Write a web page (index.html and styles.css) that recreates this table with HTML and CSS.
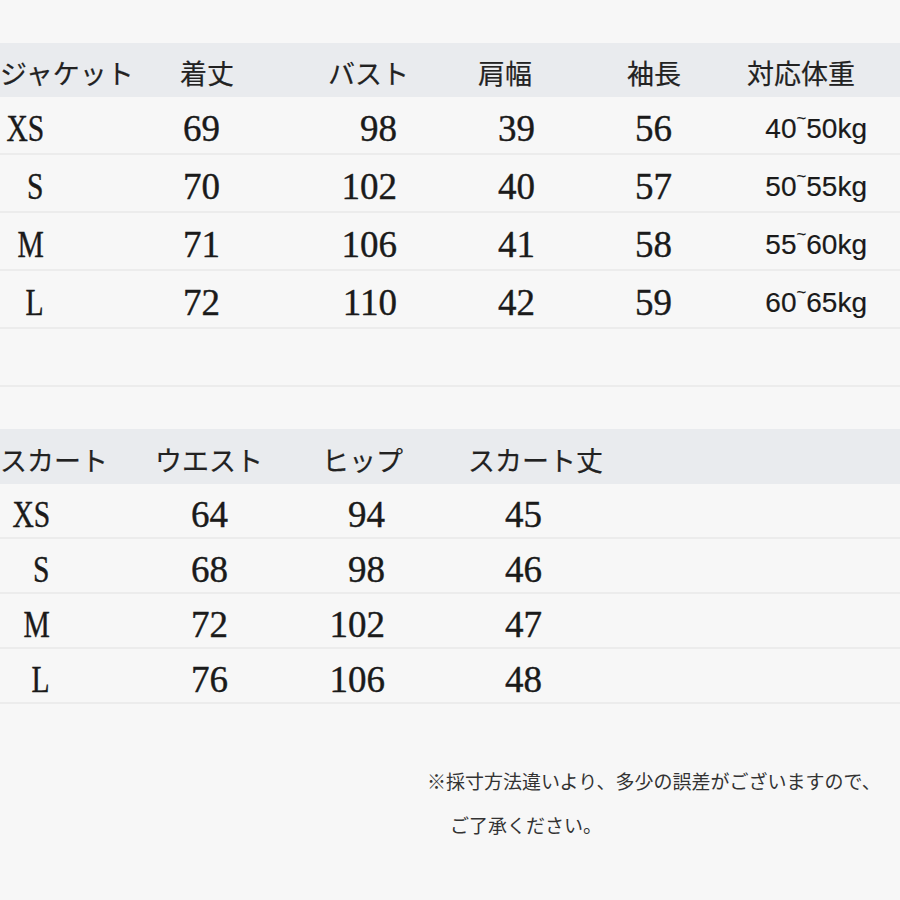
FILE: index.html
```html
<!DOCTYPE html>
<html lang="ja">
<head>
<meta charset="utf-8">
<title>サイズ表</title>
<link rel="stylesheet" href="styles.css">
</head>
<body>
<main class="page">
  <section class="table jacket">
    <div class="row head">
      <span class="h c1">ジャケット</span>
      <span class="h c2">着丈</span>
      <span class="h c3">バスト</span>
      <span class="h c4">肩幅</span>
      <span class="h c5">袖長</span>
      <span class="h c6">対応体重</span>
    </div>
    <div class="row data">
      <span class="v c1">XS</span><span class="v c2">69</span><span class="v c3">98</span><span class="v c4">39</span><span class="v c5">56</span><span class="w c6">40<span class="tilde">~</span>50kg</span>
    </div>
    <div class="row data">
      <span class="v c1">S</span><span class="v c2">70</span><span class="v c3">102</span><span class="v c4">40</span><span class="v c5">57</span><span class="w c6">50<span class="tilde">~</span>55kg</span>
    </div>
    <div class="row data">
      <span class="v c1">M</span><span class="v c2">71</span><span class="v c3">106</span><span class="v c4">41</span><span class="v c5">58</span><span class="w c6">55<span class="tilde">~</span>60kg</span>
    </div>
    <div class="row data">
      <span class="v c1">L</span><span class="v c2">72</span><span class="v c3">110</span><span class="v c4">42</span><span class="v c5">59</span><span class="w c6">60<span class="tilde">~</span>65kg</span>
    </div>
    <div class="row data empty"></div>
  </section>

  <section class="table skirt">
    <div class="row head">
      <span class="h c1">スカート</span>
      <span class="h c2">ウエスト</span>
      <span class="h c3">ヒップ</span>
      <span class="h c4">スカート丈</span>
    </div>
    <div class="row data">
      <span class="v c1">XS</span><span class="v c2">64</span><span class="v c3">94</span><span class="v c4">45</span>
    </div>
    <div class="row data">
      <span class="v c1">S</span><span class="v c2">68</span><span class="v c3">98</span><span class="v c4">46</span>
    </div>
    <div class="row data">
      <span class="v c1">M</span><span class="v c2">72</span><span class="v c3">102</span><span class="v c4">47</span>
    </div>
    <div class="row data">
      <span class="v c1">L</span><span class="v c2">76</span><span class="v c3">106</span><span class="v c4">48</span>
    </div>
  </section>

  <div class="note">
    <p class="note-line">※採寸方法違いより、多少の誤差がございますので、</p>
    <p class="note-line indent">ご了承ください。</p>
  </div>
</main>
</body>
</html>
```

FILE: styles.css
```css
html, body {
  margin: 0;
  padding: 0;
}

body {
  background: #f7f7f7;
  width: 900px;
  height: 900px;
  overflow: hidden;
  color: #1c1c1c;
}

.page {
  display: flex;
  flex-direction: column;
  width: 900px;
}

.row {
  display: grid;
  align-items: center;
  box-sizing: border-box;
}

.jacket {
  margin-top: 43px;
}

.jacket .row {
  grid-template-columns: 150px 110px 180px 140px 140px 180px;
}

.skirt {
  margin-top: 42px;
}

.skirt .row {
  grid-template-columns: 150px 150px 150px 450px;
}

.head {
  background: #e9ebee;
}

.jacket .head {
  height: 54px;
  padding-top: 4px;
}

.skirt .head {
  height: 55px;
  padding-top: 6px;
}

.data {
  border-bottom: 2px solid #ececec;
}

.jacket .data {
  height: 58px;
  padding-top: 7px;
}

.skirt .data {
  height: 55px;
  padding-top: 7px;
}

.h {
  font-family: "Noto Sans CJK JP", "Noto Sans", sans-serif;
  font-size: 27px;
  line-height: 1;
  white-space: nowrap;
  color: #222;
  text-align: left;
  -webkit-text-stroke: 0.2px #222;
}

.v {
  font-family: "Liberation Serif", "DejaVu Serif", serif;
  font-size: 37px;
  line-height: 1;
  white-space: nowrap;
  text-align: right;
  color: #1a1a1a;
  -webkit-text-stroke: 0.4px #1a1a1a;
}

.w {
  font-family: "Liberation Sans", Arial, sans-serif;
  font-size: 28px;
  line-height: 1;
  white-space: nowrap;
  text-align: right;
  color: #1a1a1a;
  -webkit-text-stroke: 0.2px #1a1a1a;
}

.tilde {
  font-size: 0.6em;
  vertical-align: 0.85em;
  line-height: 0;
}

/* size labels (condensed, right aligned) */
.v.c1 {
  justify-self: end;
  transform: scaleX(0.8);
  transform-origin: right center;
}

/* jacket table columns */
.jacket .h.c1 { text-align: right; padding-right: 22px; }
.jacket .h.c2 { padding-left: 30px; }
.jacket .h.c3 { padding-left: 68px; }
.jacket .h.c4 { padding-left: 38px; }
.jacket .h.c5 { padding-left: 47px; }
.jacket .h.c6 { padding-left: 27px; }

.jacket .v.c1 { margin-right: 106px; }
.jacket .v.c2 { padding-right: 40px; }
.jacket .v.c3 { padding-right: 43px; }
.jacket .v.c4 { padding-right: 45px; }
.jacket .v.c5 { padding-right: 48px; }
.jacket .w.c6 { padding-right: 33px; }

/* skirt table columns */
.skirt .h.c1 { text-align: right; padding-right: 48px; }
.skirt .h.c2 { padding-left: 5px; }
.skirt .h.c3 { padding-left: 22px; }
.skirt .h.c4 { padding-left: 18px; }

.skirt .v.c1 { margin-right: 100px; }
.skirt .v.c2 { padding-right: 72px; }
.skirt .v.c3 { padding-right: 65px; }
.skirt .v.c4 { text-align: left; padding-left: 55px; }

/* note */
.note {
  margin-top: 55px;
  padding-left: 427px;
  font-family: "Noto Sans CJK JP", "Noto Sans", sans-serif;
  font-size: 19px;
  color: #333;
}

.note-line {
  margin: 0;
  line-height: 44px;
  white-space: nowrap;
}

.indent {
  padding-left: 23px;
}
```
